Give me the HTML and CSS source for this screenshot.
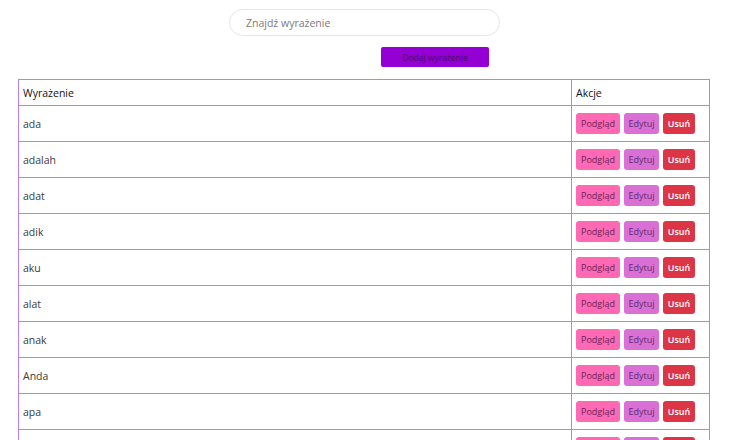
FILE: index.html
```html
<!DOCTYPE html>
<html lang="pl">
<head>
<meta charset="utf-8">
<link rel="stylesheet" href="styles.css">
</head>
<body>
<div class="page">
  <div class="search-wrap">
    <input class="search" type="text" placeholder="Znajdź wyrażenie">
  </div>
  <div class="add-wrap">
    <button class="add">Dodaj wyrażenie</button>
  </div>
  <table class="list">
    <thead>
      <tr><th class="c-word">Wyrażenie</th><th class="c-act">Akcje</th></tr>
    </thead>
    <tbody>
      <tr><td>ada</td><td><div class="acts"><button class="b b-view">Podgląd</button><button class="b b-edit">Edytuj</button><button class="b b-del">Usuń</button></div></td></tr>
      <tr><td>adalah</td><td><div class="acts"><button class="b b-view">Podgląd</button><button class="b b-edit">Edytuj</button><button class="b b-del">Usuń</button></div></td></tr>
      <tr><td>adat</td><td><div class="acts"><button class="b b-view">Podgląd</button><button class="b b-edit">Edytuj</button><button class="b b-del">Usuń</button></div></td></tr>
      <tr><td>adik</td><td><div class="acts"><button class="b b-view">Podgląd</button><button class="b b-edit">Edytuj</button><button class="b b-del">Usuń</button></div></td></tr>
      <tr><td>aku</td><td><div class="acts"><button class="b b-view">Podgląd</button><button class="b b-edit">Edytuj</button><button class="b b-del">Usuń</button></div></td></tr>
      <tr><td>alat</td><td><div class="acts"><button class="b b-view">Podgląd</button><button class="b b-edit">Edytuj</button><button class="b b-del">Usuń</button></div></td></tr>
      <tr><td>anak</td><td><div class="acts"><button class="b b-view">Podgląd</button><button class="b b-edit">Edytuj</button><button class="b b-del">Usuń</button></div></td></tr>
      <tr><td>Anda</td><td><div class="acts"><button class="b b-view">Podgląd</button><button class="b b-edit">Edytuj</button><button class="b b-del">Usuń</button></div></td></tr>
      <tr><td>apa</td><td><div class="acts"><button class="b b-view">Podgląd</button><button class="b b-edit">Edytuj</button><button class="b b-del">Usuń</button></div></td></tr>
      <tr><td>atas</td><td><div class="acts"><button class="b b-view">Podgląd</button><button class="b b-edit">Edytuj</button><button class="b b-del">Usuń</button></div></td></tr>
    </tbody>
  </table>
</div>
</body>
</html>
```
FILE: styles.css
```css
html, body {
  margin: 0;
  padding: 0;
  background: #fff;
  overflow: hidden;
}
body {
  font-family: "Open Sans", "Noto Sans", sans-serif;
  color: #333;
}
.page {
  padding: 9px 26px 0 18px;
}
.search-wrap {
  display: flex;
  padding-left: 211px;
}
.search {
  width: 271px;
  height: 27px;
  box-sizing: border-box;
  border: 1px solid #e6e6e6;
  border-radius: 14px;
  padding: 0 16px;
  font-family: "Open Sans", sans-serif;
  font-size: 10.5px;
  color: #555;
  outline: none;
}
.search::placeholder {
  color: #7a7a7a;
}
.add-wrap {
  display: flex;
  padding-left: 363px;
  margin-top: 11px;
}
.add {
  width: 108px;
  height: 20px;
  background: #9400d3;
  border: none;
  border-radius: 2px;
  color: #4a0a66;
  font-family: "Open Sans", sans-serif;
  font-size: 8.5px;
  padding: 0;
}
.list {
  margin-top: 12px;
  width: 692px;
  border-collapse: collapse;
  font-size: 10.5px;
}
.list th, .list td {
  border: 1px solid #c27fe3;
  text-align: left;
  padding: 0 4px;
}
.list th {
  height: 25px;
  font-weight: 400;
  color: #111;
}
.list td {
  height: 35px;
  color: #3a3a3a;
}
.c-word { width: 544px; }
.acts {
  display: flex;
  gap: 4px;
}
.b {
  height: 21px;
  border: none;
  border-radius: 3px;
  font-family: "Open Sans", sans-serif;
  font-size: 9px;
  padding: 0;
}
.b-view { width: 44px; background: #ff69b4; color: #6a2454; }
.b-edit { width: 35px; background: #da70d6; color: #5c2a66; }
.b-del { width: 32px; background: #dc3545; color: #fff; font-weight: 600; }
```
